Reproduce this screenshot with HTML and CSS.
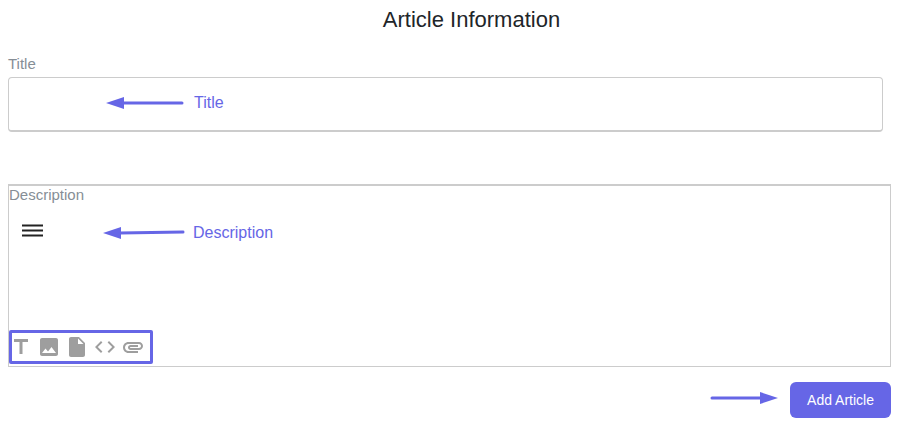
FILE: index.html
```html
<!DOCTYPE html>
<html lang="en">
<head>
    <title>Article Information</title>
    <meta charset="utf-8">
    <meta name="viewport" content="width=device-width, initial-scale=1">
    <link rel="stylesheet" href="styles.css">
</head>
<body>
    <form class="article-form">
        <h2>Article Information</h2>

        <!-- Title -->
        <div class="title-group">
            <label for="title">Title</label>
            <div class="title-field">
                <input type="text" id="title">
                <div class="note title-note">
                    <svg width="78" height="14" viewBox="0 0 78 14">
                        <path d="M17 7H76" stroke="#6666e6" stroke-width="3" stroke-linecap="round"/>
                        <path d="M0 7L18 1V13Z" fill="#6666e6"/>
                    </svg>
                    <span>Title</span>
                </div>
            </div>
        </div>

        <!-- Description editor -->
        <div class="editor">
            <label for="description">Description</label>
            <div class="editor-body">
                <button type="button" class="menu" aria-label="Menu">
                    <svg width="22" height="14" viewBox="0 0 22 14">
                        <path d="M0 2.500H21M0 7.500H21M0 12.500H21" stroke="#222" stroke-width="2"/>
                    </svg>
                </button>
                <textarea id="description"></textarea>
            </div>
            <div class="note description-note">
                <svg width="82" height="14" viewBox="0 0 82 14">
                    <path d="M17 7L80 6" stroke="#6666e6" stroke-width="3" stroke-linecap="round"/>
                    <path d="M0 7L18 1V13Z" fill="#6666e6"/>
                </svg>
                <span>Description</span>
            </div>
            <div class="toolbar">
                <button type="button" aria-label="Text">
                    <svg viewBox="0 0 24 24"><path d="M5 4v3h5.500v12h3V7H19V4z"/></svg>
                </button>
                <button type="button" aria-label="Image">
                    <svg viewBox="0 0 24 24"><path d="M21 19V5c0-1.100-.9-2-2-2H5c-1.100 0-2 .9-2 2v14c0 1.100.9 2 2 2h14c1.100 0 2-.9 2-2zM8.500 13.500l2.500 3.010L14.500 12l4.500 6H5l3.500-4.500z"/></svg>
                </button>
                <button type="button" aria-label="File">
                    <svg viewBox="0 0 24 24"><path d="M6 2c-1.100 0-1.990.9-1.990 2L4 20c0 1.100.89 2 1.990 2H18c1.100 0 2-.9 2-2V8l-6-6H6zm7 7V3.500L18.500 9H13z"/></svg>
                </button>
                <button type="button" aria-label="Code">
                    <svg viewBox="0 0 24 24"><path d="M9.400 16.600L4.800 12l4.600-4.600L8 6l-6 6 6 6 1.400-1.400zm5.200 0l4.600-4.600-4.600-4.600L16 6l6 6-6 6-1.400-1.400z"/></svg>
                </button>
                <button type="button" aria-label="Attachment">
                    <svg viewBox="0 0 24 24"><path d="M2 12.500C2 9.460 4.460 7 7.500 7H18c2.210 0 4 1.790 4 4s-1.790 4-4 4H9.500C8.120 15 7 13.880 7 12.500S8.120 10 9.500 10H17v2H9.410c-.55 0-.55 1 0 1H18c1.100 0 2-.9 2-2s-.9-2-2-2H7.500C5.570 9 4 10.570 4 12.500S5.570 16 7.500 16H17v2H7.500C4.460 18 2 15.540 2 12.500z"/></svg>
                </button>
            </div>
        </div>

        <div class="actions">
            <svg width="68" height="18" viewBox="0 0 68 18">
                <path d="M2 7H51" stroke="#6666e6" stroke-width="3" stroke-linecap="round"/>
                <path d="M68 7L50 1V13Z" fill="#6666e6"/>
            </svg>
            <button type="submit" class="add">Add Article</button>
        </div>
    </form>
</body>
</html>
```
FILE: styles.css
```css
body {
    margin: 0;
    font-family: "Liberation Sans", Arial, sans-serif;
    background-color: white;
}

.article-form {
    padding: 8px 14px 8px 8px;
}

h2 {
    margin: 0 0 20px;
    padding-left: 44px;
    font-size: 22px;
    line-height: 24px;
    font-weight: normal;
    text-align: center;
    color: #212529;
}

label {
    display: block;
    font-size: 15px;
    line-height: 20px;
    color: #868e96;
}

button {
    padding: 0;
    border: none;
    background: none;
    font-family: inherit;
    cursor: pointer;
}

svg {
    display: block;
}

.title-group {
    margin-bottom: 52px;
    padding-right: 8px;
}

.title-group label {
    padding: 2px 0 3px;
}

.title-field {
    position: relative;
}

.title-field input {
    display: block;
    width: 100%;
    height: 55px;
    padding: 8px;
    border: 1px solid #ccc;
    border-bottom-width: 2px;
    border-radius: 4px;
    box-sizing: border-box;
    font-size: 16px;
}

/* Callouts that lie over the fields */
.note {
    position: absolute;
    display: flex;
    align-items: center;
    gap: 10px;
    font-size: 16px;
    line-height: 20px;
    color: #6666e6;
    pointer-events: none;
}

.title-note {
    top: 16px;
    left: 98px;
}

.description-note {
    top: 37px;
    left: 94px;
    gap: 8px;
}

.editor {
    position: relative;
    border: 1px solid #ccc;
    border-top-width: 2px;
}

.editor label {
    line-height: 18px;
}

.editor-body {
    display: flex;
    align-items: flex-start;
    gap: 8px;
    height: 126px;
    padding-left: 13px;
    box-sizing: border-box;
}

.menu {
    margin-top: 19px;
}

.editor-body textarea {
    flex: 1;
    height: 100%;
    padding: 16px 8px;
    border: none;
    outline: none;
    resize: none;
    box-sizing: border-box;
    background: none;
    font-family: inherit;
    font-size: 16px;
}

.toolbar {
    display: inline-flex;
    gap: 4px;
    margin-bottom: 2px;
    padding: 5px 8px 5px 0;
    border-radius: 2px;
    box-shadow: inset 0 0 0 3px #6666e6;
    vertical-align: top;
}

.toolbar svg {
    width: 24px;
    height: 24px;
    fill: #9e9e9e;
}

.actions {
    display: flex;
    justify-content: flex-end;
    align-items: center;
    gap: 12px;
    margin-top: 15px;
}

.add {
    height: 36px;
    padding: 0 17px;
    border-radius: 6px;
    background-color: #6666e6;
    color: white;
    font-size: 14px;
}
```
